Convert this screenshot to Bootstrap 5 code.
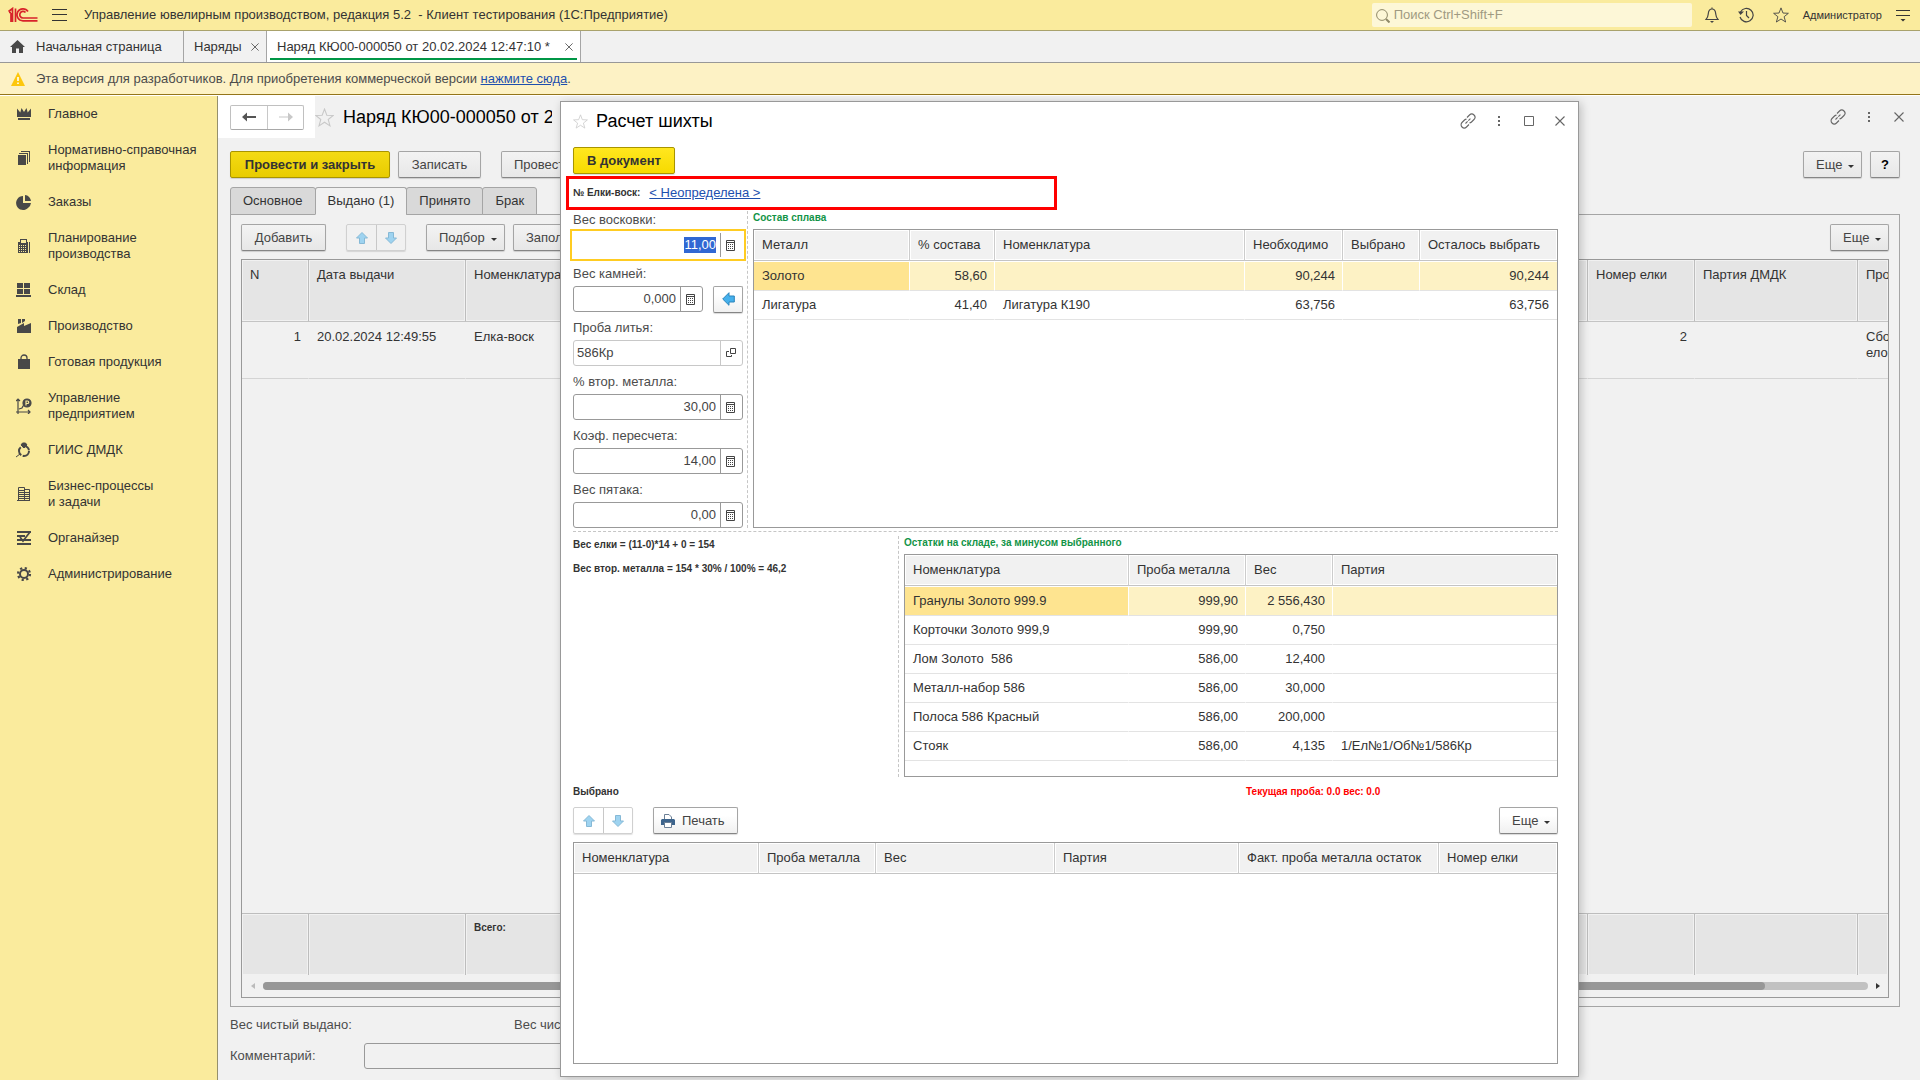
<!DOCTYPE html>
<html lang="ru">
<head>
<meta charset="utf-8">
<meta name="viewport" content="width=device-width, initial-scale=1">
<title>Управление ювелирным производством</title>
<link rel="stylesheet" href="https://cdn.jsdelivr.net/npm/bootstrap@5.3.0/dist/css/bootstrap.min.css">
<style>
body{font-family:"Liberation Sans",Arial,sans-serif;font-size:13px;line-height:16px;color:#333;background:#f1f1f1;min-height:100vh}
svg{display:block;flex:none}
a{color:#1d4fae}
::selection{background:#3067d3;color:#fff}
.topbar{height:31px;background:#faeb9d;border-bottom:1px solid #a9a26c;padding-right:10px}
.plain-btn{border:0;background:none;padding:0;color:#444}
.menu-btn{margin:0 17px 0 14px}
.top-tools{gap:19px;margin:0 14px 0 13px}
.search-box{width:320px;height:24px;background:#fdf7d7;border-radius:2px}
.search-box input{border:0;background:none;padding:0;outline:0;font-size:13px}
.search-box input::placeholder{color:#a09a82;opacity:1}
.user-name{font-size:11px;color:#333;margin-right:14px}
.tabbar{height:32px;background:#f1f1f1;border-bottom:1px solid #989898}
.page-tab{border-right:1px solid #a5a5a5;height:31px;padding:0 7px 0 10px}
.page-tab svg{color:#555}
.page-tab.home{width:184px;gap:11px}
.page-tab.list{width:83px}
.page-tab.current{width:314px;background:#fff;position:relative}
.page-tab.current::after{content:"";position:absolute;left:3px;right:3px;bottom:2px;height:2px;background:#009646}
.notice{height:32px;background:#fdf2c5;border-bottom:1px solid #94751a;color:#4c4c4c;padding-left:11px;gap:11px}
.workspace{border-top:1px solid #fff}
.sidebar{width:218px;background:#faeb9d;border-right:1px solid #95906c}
.sidebar a{color:#333;text-decoration:none;padding:10px 12px 10px 16px;gap:16px}
.sidebar svg{color:#484848}
.main{background:#f1f1f1;min-width:0}
.nav-history{width:97px;height:42px;background:#fff;padding-left:12px}
.seg{border:1px solid #c0c0c0;border-bottom-color:#a8a8a8;border-radius:2px}
.seg button{border:0;background:none;width:36px;height:23px;padding:0}
.seg button+button{border-left:1px solid #c8c8c8}
.seg.arrows button{width:29px;height:25px}
.seg.arrows{border-color:#d0d0d0;box-shadow:0 1px 1px rgba(0,0,0,.12);margin:0 20px}
.seg.arrows.at-start{margin-left:0}
.form-title{font-size:18px;line-height:22px;color:#000;margin:0;font-weight:400}
.doc-title{width:209px;overflow:hidden;margin-left:9px}
.win-tools{gap:21px;color:#666}
.win-tools .close-gap{margin-left:2px}
.doc-tools{padding-right:16px}
.form-area{padding:13px 20px 11px 12px}
.cmd{height:27px;font-size:13px;line-height:16px;padding:0 12px;border:1px solid #a5a5a5;border-bottom-color:#858585;border-radius:2px;color:#444;background:linear-gradient(#f3f3f3,#e7e7e7);box-shadow:0 1px 1px rgba(0,0,0,.15)}
.cmd-main{background:linear-gradient(#f4da14,#e8cc00);border-color:#a89400;font-weight:700;color:#333}
.cmd-more{width:59px;padding:0 7px 0 12px}
.cmd-pick{width:79px;padding:0 7px 0 12px}
.cmd-help{width:30px;padding:0}
.cmd-print{padding:0 12px 0 7px;gap:7px;width:85px}
.w-post{width:160px}.w-save{width:83px}.w-add{width:85px}.w-doc{width:102px}
.caret{border:3px solid transparent;border-top-color:#333;border-bottom:0;margin-top:4px}
.cmd-row{margin-bottom:9px}
.form-tabs{border:0;margin-bottom:-1px;position:relative;z-index:1}
.form-tabs .nav-link{height:28px;padding:0 12px;border:1px solid #a5a5a5;border-radius:3px 3px 0 0;background:#d9d9d9;color:#333;margin:0 0 0 -1px;line-height:16px}
.form-tabs .nav-item:first-child .nav-link{margin-left:0}
.form-tabs .nav-link.active{background:#f1f1f1;border-color:#a5a5a5;border-bottom-color:#f1f1f1;color:#333}
.form-panel{border:1px solid #a5a5a5;padding:9px 10px 8px}
.grid-box{border:1px solid #999;background:#fff;overflow:hidden}
.grid-tbl{width:100%;table-layout:fixed;border-collapse:separate;border-spacing:0}
.grid-tbl th,.grid-tbl td{font-weight:400;padding:0 7px 0 8px;white-space:nowrap;overflow:hidden;border-right:1px solid #ccc}
.grid-tbl th{height:31px;background:#f1f1f1;border-bottom:1px solid #c4c4c4;box-shadow:inset 0 0 0 1px #fff}
.grid-tbl td{height:29px;border-bottom:1px solid #e3e3e3;border-right-color:transparent}
.grid-tbl th:last-child,.grid-tbl td:last-child{border-right:0;padding-right:8px}
.grid-tbl .picked td{height:30px;background:#fdf2c5;border-right-color:#fff;box-shadow:inset 0 1px #fff;background-clip:padding-box}
.grid-tbl .picked td:first-child{background:#fee490}
.grid-main{background:#f1f1f1}
.grid-main th,.grid-main tfoot td{height:62px;background:#e5e5e5;vertical-align:top;padding-top:7px;border-right:1px solid #bdbdbd;box-shadow:inset 0 0 0 1px #f1f1f1}
.grid-main tbody td{height:57px;vertical-align:top;padding-top:7px;border-bottom-color:#d4d4d4}
.grid-main tfoot td{border-bottom:0;border-top:1px solid #bdbdbd}
.grid-main th:last-child,.grid-main td:last-child{padding-right:0}
.c-30{width:30px}.c-67{width:67px}.c-77{width:77px}.c-85{width:85px}.c-87{width:87px}.c-98{width:98px}.c-107{width:107px}.c-117{width:117px}
.c-156{width:156px}.c-157{width:157px}.c-163{width:163px}.c-179{width:179px}.c-184{width:184px}.c-185{width:185px}.c-200{width:200px}.c-224{width:224px}.c-250{width:250px}
.tiny,.grid-main tfoot .tiny{font-size:10px;line-height:14px;font-weight:700}
.scroller{height:22px;padding:0 8px 0 9px;gap:8px}
.scroll-track{height:8px;background:#c1c1c1;border-radius:4px}
.scroll-thumb{height:8px;background:#979797;border-radius:4px}
.summary{color:#4c4c4c}
.totals{margin:10px 0}
.totals span{width:284px}
.summary .lbl{width:134px}
.comment-in{height:26px;width:700px;border:1px solid #999;border-radius:3px;background:#f1f1f1}
.dlg{position:absolute;left:342px;top:5px;bottom:3px;width:1019px;background:#fff;border:1px solid #999;box-shadow:2px 2px 9px rgba(0,0,0,.22);z-index:5}
.dlg-head{height:38px;padding:0 13px 0 12px}
.dlg-body{padding:7px 20px 12px 12px}
.dlg .cmd{background:linear-gradient(#fff 30%,#f0f0f0)}
.dlg .cmd-main{background:linear-gradient(#ffe71f,#f7da00)}
.tree-box{border:3px solid #f00;width:491px;height:34px;margin:2px 0 1px -7px;padding-left:4px;gap:9px}
.fields{width:175px;border-right:1px dashed #c6c6c6;color:#4c4c4c}
.field{margin-bottom:7px}
.field:last-child{margin-bottom:0}
.field label{display:block;padding-top:1px;margin-bottom:4px}
.field-line{gap:10px;height:26px}
.entry{height:26px;width:170px;border:1px solid #999;border-radius:3px;background:#fff}
.entry.short{width:130px}
.entry input{border:0;outline:0;background:none;font-size:13px;padding:0 4px 0 3px;min-width:0;color:#444}
.entry button{flex:none;width:22px;border:0;border-left:1px solid #999;background:none;padding:0 0 0 5px;color:#444;align-self:stretch}
.entry.locked,.entry.locked button{border-color:#c8c8c8}
.entry.hot{border-color:#fff;border-radius:0;box-shadow:0 0 0 1px #fff,0 0 0 3px #fc2}
.back-btn{width:30px;height:27px;padding:0}
.beside{margin-left:5px}
.split-h{border-top:1px dashed #c6c6c6;margin:3px 0 4px}
.calc{width:326px;border-right:1px dashed #c6c6c6;padding-top:2px}
.calc p{margin:0 0 10px}
.green{color:#129447}
.stock{height:223px}
.status{color:#f00;width:312px}
</style>
</head>
<body class="d-flex flex-column">
<svg width="0" height="0" class="position-absolute" aria-hidden="true">
<defs>
<symbol id="i-star" viewBox="0 0 18 18"><path d="M9 1l2.200 5.800 6.100.300-4.800 3.800 1.700 6L9 13.500 3.800 16.900l1.700-6L.700 7.100l6.100-.300z" fill="none" stroke="currentColor"/></symbol>
<symbol id="i-link" viewBox="0 0 16 16"><g fill="none" stroke="currentColor" stroke-width="1.100"><path d="M7 4.500l2.500-2.500a3 3 0 0 1 4.500 4.500L11.500 9A3 3 0 0 1 9.500 9.900M9 11.500L6.500 14A3 3 0 0 1 2 9.500L4.500 7A3 3 0 0 1 6.500 6.100"/><path d="M5.500 10.500l5-5" stroke-dasharray="3 1"/></g></symbol>
<symbol id="i-dots" viewBox="0 0 4 12"><path d="M1 1h2v2H1zM1 5h2v2H1zM1 9h2v2H1z" fill="currentColor"/></symbol>
<symbol id="i-x" viewBox="0 0 10 10"><path d="M.500.500l9 9M9.500.500l-9 9" stroke="currentColor" stroke-width="1.100"/></symbol>
<symbol id="i-calc" viewBox="0 0 9 11"><path d="M.500.500h8v10h-8z" fill="none" stroke="currentColor"/><path d="M1 2.500h7M2 4.500h1M4 4.500h1M6 4.500h1M2 6.500h1M4 6.500h1M6 6.500h1M2 8.500h1M4 8.500h1M6 8.500h1" stroke="currentColor"/></symbol>
<symbol id="i-up" viewBox="0 0 12 12"><path d="M6 .500L11.500 6H8.500v5.500h-5V6H.500z" fill="#9ed3f0" stroke="#86b9d6"/></symbol>
<symbol id="i-down" viewBox="0 0 12 12"><path d="M6 11.500L11.500 6H8.500V.500h-5V6H.500z" fill="#9ed3f0" stroke="#86b9d6"/></symbol>
</defs>
</svg>

<header class="topbar d-flex align-items-center">
  <svg class="ms-2" width="30" height="16" viewBox="0 0 30 16" fill="none" stroke="#d8232a" stroke-width="1.700"><path d="M.500 4.500L4.500 1.500V15M3 6v9M7.500 15V1.500M1 5.500h2"/><path d="M20 4.500A6 6 0 1 0 15 13.800H29.500"/><path d="M17.500 5.500A3.300 3.300 0 1 0 15 11H29.500"/></svg>
  <button class="plain-btn menu-btn" aria-label="Меню"><svg width="15" height="12" viewBox="0 0 15 12"><path d="M0 .500h15M0 5.500h15M0 11.500h15" stroke="#333"/></svg></button>
  <span class="text-nowrap">Управление ювелирным производством, редакция 5.2 &nbsp;- Клиент тестирования (1С:Предприятие)</span>
  <div class="search-box ms-auto d-flex align-items-center">
    <svg class="ms-1" width="14" height="15" viewBox="0 0 14 15" fill="none" stroke="#8f8968"><circle cx="6" cy="7" r="5.400"/><path d="M10 11l3.500 3.500" stroke-width="2"/></svg>
    <input class="flex-grow-1 ms-1" type="search" placeholder="Поиск Ctrl+Shift+F" aria-label="Поиск">
  </div>
  <div class="top-tools d-flex align-items-center">
    <button class="plain-btn" aria-label="Уведомления"><svg width="14" height="16" viewBox="0 0 14 16"><path d="M1 12.500c2-2 2-3 2.300-6C3.600 3.500 5 2 7 2s3.400 1.500 3.700 4.500c.300 3 .300 4 2.300 6zM7 .500V2" fill="none" stroke="currentColor" stroke-width="1.200"/><path d="M5 14h4l-2 2z" fill="currentColor"/></svg></button>
    <button class="plain-btn" aria-label="История"><svg width="16" height="16" viewBox="0 0 16 16"><path d="M2.500 5A6.700 6.700 0 1 1 2 10M8.500 4v4.500l2.500 2.500" fill="none" stroke="currentColor" stroke-width="1.200"/><path d="M0 4.500h6L2.500 8z" fill="currentColor"/></svg></button>
    <button class="plain-btn" aria-label="Избранное"><svg width="16" height="16"><use href="#i-star"/></svg></button>
  </div>
  <span class="user-name">Администратор</span>
  <button class="plain-btn" aria-label="Настройки"><svg width="14" height="14" viewBox="0 0 14 14"><path d="M0 2.500h14M0 7.500h14" stroke="#333"/><path d="M4.500 11h5L7 13.500z" fill="#333"/></svg></button>
</header>

<nav class="tabbar d-flex" aria-label="Открытые окна">
  <div class="page-tab home d-flex align-items-center">
    <svg width="15" height="13" viewBox="0 0 15 13"><path d="M7.500 0L15 7h-2v6H9V8.500H6V13H2V7H0z" fill="#484848"/></svg>Начальная страница</div>
  <div class="page-tab list d-flex align-items-center justify-content-between">Наряды <svg width="8" height="8"><use href="#i-x"/></svg></div>
  <div class="page-tab current d-flex align-items-center justify-content-between">Наряд КЮ00-000050 от 20.02.2024 12:47:10 * <svg width="8" height="8"><use href="#i-x"/></svg></div>
</nav>

<div class="notice d-flex align-items-center">
  <svg width="14" height="14" viewBox="0 0 14 14"><path d="M7 0l7 14H0z" fill="#fdc70c"/><path d="M7 5v4M7 10.500v1.500" stroke="#fff" stroke-width="1.600"/></svg>
  <span>Эта версия для разработчиков. Для приобретения коммерческой версии <a href="#">нажмите сюда</a>.</span>
</div>

<div class="workspace d-flex flex-grow-1">
<aside class="sidebar flex-shrink-0 d-flex flex-column">
  <a href="#" class="d-flex align-items-center"><svg width="16" height="16" viewBox="0 0 16 16" fill="currentColor"><path d="M1 2.500l3.300 4L5.500 2l2.500 4L10.500 2l1.200 4.500 3.300-4v8.500H1zM2 12h12v2H2z"/></svg>Главное</a>
  <a href="#" class="d-flex align-items-center"><svg width="16" height="16" viewBox="0 0 16 16" fill="currentColor"><path d="M2 5h8v10H2zM3 3h9v11h-1V4H3zM5 1h9v11h-1V2H5z"/></svg>Нормативно-справочная информация</a>
  <a href="#" class="d-flex align-items-center"><svg width="16" height="16" viewBox="0 0 16 16" fill="currentColor"><path d="M7 2v7l4.500 4.500 .500.500A7 7 0 1 1 7 2zM7 9h8a7 7 0 0 1-3 5zM9 1a6.500 6.500 0 0 1 6 6H9z"/></svg>Заказы</a>
  <a href="#" class="d-flex align-items-center"><svg width="16" height="16" viewBox="0 0 16 16"><path fill="currentColor" fill-rule="evenodd" d="M2 4h2V1h7v3h1v11H2zM5 2v3h5V2zM13 4h1v11h-1zM3 7v1h1V7zm2 0v1h1V7zm2 0v1h1V7zm2 0v1h1V7zM3 9v1h1V9zm2 0v1h1V9zm2 0v1h1V9zm2 0v1h1V9zM3 11v1h1v-1zm2 0v1h1v-1zm2 0v1h1v-1zm2 0v1h1v-1zM3 13v1h1v-1zm2 0v1h1v-1zm2 0v1h1v-1zm2 0v1h1v-1z"/></svg>Планирование производства</a>
  <a href="#" class="d-flex align-items-center"><svg width="16" height="16" viewBox="0 0 16 16" fill="currentColor"><path d="M1 1h6v5H1zM8 1h6v5H8zM1 7h6v5H1zM8 7h6v5H8zM0 13h15v2H0z"/></svg>Склад</a>
  <a href="#" class="d-flex align-items-center"><svg width="16" height="16" viewBox="0 0 16 16" fill="currentColor"><path d="M2 1h3v4L2 6zM6 1h3v2L6 5zM1 9l7-4v3l7-3v10H1z"/></svg>Производство</a>
  <a href="#" class="d-flex align-items-center"><svg width="16" height="16" viewBox="0 0 16 16"><path d="M2 5h12v10H2z" fill="currentColor"/><path d="M5 8V4a3 3 0 0 1 6 0v4" fill="none" stroke="currentColor" stroke-width="1.300"/></svg>Готовая продукция</a>
  <a href="#" class="d-flex align-items-center"><svg width="16" height="16" viewBox="0 0 16 16" fill="none" stroke="currentColor" stroke-width="1.200"><path d="M2 16V1M0 3l2-2 2 2M0 14h14M12 12l2 2-2 2M3 11l3-1 1-2 3-1"/><circle cx="11" cy="5" r="4" fill="currentColor"/><path d="M10 7.500V3h1.500a1 1 0 0 1 0 2.500H9.500" stroke="#faeb9d"/></svg>Управление предприятием</a>
  <a href="#" class="d-flex align-items-center"><svg width="16" height="16" viewBox="0 0 16 16"><circle cx="8" cy="9" r="5" fill="none" stroke="currentColor" stroke-width="2" stroke-dasharray="9 1.500"/><path d="M5 3l1.500-2h3L11 3 8 6zM0 15l4-3" fill="currentColor" stroke="currentColor"/></svg>ГИИС ДМДК</a>
  <a href="#" class="d-flex align-items-center"><svg width="16" height="16" viewBox="0 0 16 16" fill="none" stroke="currentColor"><path d="M2.500 15V1.500h6V15M8.500 3.500h5V15M1 14.500h13M3 4.500h6M3 6.500h10M3 8.500h10M3 10.500h10M3 12.500h10"/></svg>Бизнес-процессы<br>и задачи</a>
  <a href="#" class="d-flex align-items-center"><svg width="16" height="16" viewBox="0 0 16 16" fill="none" stroke="currentColor" stroke-width="2"><path d="M1 2h14M1 6h8M1 10h14M1 14h14"/><path d="M4 7l3 4 7-9" stroke-width="1.700"/></svg>Органайзер</a>
  <a href="#" class="d-flex align-items-center"><svg width="16" height="16" viewBox="0 0 16 16" fill="none" stroke="currentColor"><circle cx="8" cy="8" r="4" stroke-width="2"/><circle cx="8" cy="8" r="6" stroke-width="2.200" stroke-dasharray="2.200 2.512"/></svg>Администрирование</a>
</aside>

<main class="main flex-grow-1 position-relative d-flex flex-column">
  <div class="d-flex align-items-center">
    <div class="nav-history d-flex align-items-center">
      <div class="seg d-flex"><button aria-label="Назад"><svg class="mx-auto" width="14" height="10" viewBox="0 0 14 10"><path d="M0 5l5-4.500V4h9v2H5v3.500z" fill="#555"/></svg></button><button aria-label="Вперед"><svg class="mx-auto" width="14" height="10" viewBox="0 0 14 10"><path d="M14 5L9 .500V4.500H0v1h9v4z" fill="#c8c8c8"/></svg></button></div>
    </div>
    <svg width="19" height="19" color="#c8c8c8"><use href="#i-star"/></svg>
    <h1 class="form-title doc-title text-nowrap">Наряд КЮ00-000050 от 20.02.2024</h1>
    <div class="win-tools doc-tools ms-auto d-flex align-items-center">
      <svg width="16" height="16"><use href="#i-link"/></svg><svg width="4" height="12"><use href="#i-dots"/></svg><svg class="close-gap" width="10" height="10"><use href="#i-x"/></svg>
    </div>
  </div>

  <div class="form-area d-flex flex-column flex-grow-1">
    <div class="cmd-row d-flex">
      <button class="cmd cmd-main w-post me-2">Провести и закрыть</button>
      <button class="cmd w-save me-3">Записать</button>
      <button class="cmd ms-1">Провести</button>
      <button class="cmd cmd-more ms-auto me-2 d-flex align-items-center justify-content-between">Еще<span class="caret"></span></button>
      <button class="cmd cmd-help fw-bold text-black">?</button>
    </div>
    <ul class="nav nav-tabs form-tabs">
      <li class="nav-item"><button class="nav-link">Основное</button></li>
      <li class="nav-item"><button class="nav-link active">Выдано (1)</button></li>
      <li class="nav-item"><button class="nav-link">Принято</button></li>
      <li class="nav-item"><button class="nav-link">Брак</button></li>
    </ul>
    <section class="form-panel flex-grow-1 d-flex flex-column">
      <div class="d-flex mb-2">
        <button class="cmd w-add">Добавить</button>
        <div class="seg arrows d-flex"><button aria-label="Вверх"><svg class="mx-auto" width="12" height="12"><use href="#i-up"/></svg></button><button aria-label="Вниз"><svg class="mx-auto" width="12" height="12"><use href="#i-down"/></svg></button></div>
        <button class="cmd cmd-pick me-2 d-flex align-items-center justify-content-between">Подбор<span class="caret"></span></button>
        <button class="cmd">Заполнить</button>
        <button class="cmd cmd-more ms-auto d-flex align-items-center justify-content-between">Еще<span class="caret"></span></button>
      </div>
      <div class="grid-box grid-main flex-grow-1 d-flex flex-column">
        <table class="grid-tbl">
          <colgroup><col class="c-67"><col class="c-157"><col><col class="c-107"><col class="c-163"><col class="c-30"></colgroup>
          <thead><tr><th>N</th><th>Дата выдачи</th><th>Номенклатура</th><th>Номер елки</th><th>Партия ДМДК</th><th>Проба</th></tr></thead>
          <tbody><tr><td class="text-end">1</td><td>20.02.2024 12:49:55</td><td>Елка-воск</td><td class="text-end">2</td><td></td><td>Сборка<br>елок</td></tr></tbody>
        </table>
        <table class="grid-tbl mt-auto">
          <colgroup><col class="c-67"><col class="c-157"><col><col class="c-107"><col class="c-163"><col class="c-30"></colgroup>
          <tfoot><tr><td></td><td></td><td class="tiny">Всего:</td><td></td><td></td><td></td></tr></tfoot>
        </table>
        <div class="scroller d-flex align-items-center">
          <svg width="4" height="6" viewBox="0 0 4 6"><path d="M4 0v6L0 3z" fill="#bbb"/></svg>
          <div class="scroll-track flex-grow-1"><div class="scroll-thumb" style="width:93.6%"></div></div>
          <svg width="4" height="6" viewBox="0 0 4 6"><path d="M0 0v6l4-3z" fill="#333"/></svg>
        </div>
      </div>
    </section>
    <div class="summary totals d-flex"><span>Вес чистый выдано:</span><span>Вес чистый принято:</span></div>
    <div class="summary d-flex align-items-center"><label class="lbl" for="comment">Комментарий:</label><input id="comment" class="comment-in"></div>
  </div>

  <section class="dlg d-flex flex-column" role="dialog" aria-label="Расчет шихты">
    <div class="dlg-head d-flex align-items-center">
      <svg width="15" height="15" color="#ccc"><use href="#i-star"/></svg>
      <h2 class="form-title ms-2">Расчет шихты</h2>
      <div class="win-tools ms-auto d-flex align-items-center">
        <svg width="16" height="16"><use href="#i-link"/></svg><svg width="4" height="12"><use href="#i-dots"/></svg>
        <svg class="close-gap" width="10" height="10" viewBox="0 0 10 10"><path d="M.500.500h9v9h-9z" fill="none" stroke="currentColor"/></svg>
        <svg width="10" height="10"><use href="#i-x"/></svg>
      </div>
    </div>
    <div class="dlg-body d-flex flex-column flex-grow-1">
      <div><button class="cmd cmd-main w-doc d-block">В документ</button></div>
      <div class="tree-box d-flex align-items-center"><span class="tiny">№ Елки-воск:</span><a href="#">&lt; Неопределена &gt;</a></div>
      <div class="d-flex">
        <div class="fields flex-shrink-0">
          <div class="field"><label for="f1">Вес восковки:</label><div class="entry hot d-flex"><input id="f1" class="flex-grow-1 text-end" value="11,00"><button aria-label="Калькулятор"><svg width="9" height="11"><use href="#i-calc"/></svg></button></div></div>
          <div class="field"><label for="f2">Вес камней:</label><div class="field-line d-flex align-items-center"><div class="entry short d-flex"><input id="f2" class="flex-grow-1 text-end" value="0,000"><button aria-label="Калькулятор"><svg width="9" height="11"><use href="#i-calc"/></svg></button></div><button class="cmd back-btn" aria-label="Заполнить"><svg class="mx-auto" width="13" height="14" viewBox="0 0 13 14"><path d="M.700 7L7 .700V4h5.300v6H7v3.300z" fill="#45b0ec" stroke="#2a84bb"/></svg></button></div></div>
          <div class="field"><label for="f3">Проба литья:</label><div class="entry locked d-flex"><input id="f3" class="flex-grow-1" value="586Кр"><button aria-label="Открыть"><svg width="11" height="10" viewBox="0 0 11 10"><path d="M4.500.500h5v5h-5zM3 3.500H.500v5h5V7" fill="none" stroke="currentColor"/></svg></button></div></div>
          <div class="field"><label for="f4">% втор. металла:</label><div class="entry d-flex"><input id="f4" class="flex-grow-1 text-end" value="30,00"><button aria-label="Калькулятор"><svg width="9" height="11"><use href="#i-calc"/></svg></button></div></div>
          <div class="field"><label for="f5">Коэф. пересчета:</label><div class="entry d-flex"><input id="f5" class="flex-grow-1 text-end" value="14,00"><button aria-label="Калькулятор"><svg width="9" height="11"><use href="#i-calc"/></svg></button></div></div>
          <div class="field"><label for="f6">Вес пятака:</label><div class="entry d-flex"><input id="f6" class="flex-grow-1 text-end" value="0,00"><button aria-label="Калькулятор"><svg width="9" height="11"><use href="#i-calc"/></svg></button></div></div>
        </div>
        <div class="beside flex-grow-1 d-flex flex-column">
          <div class="tiny green mb-1">Состав сплава</div>
          <div class="grid-box flex-grow-1">
            <table class="grid-tbl">
              <colgroup><col class="c-156"><col class="c-85"><col class="c-250"><col class="c-98"><col class="c-77"><col></colgroup>
              <thead><tr><th>Металл</th><th>% состава</th><th>Номенклатура</th><th>Необходимо</th><th>Выбрано</th><th>Осталось выбрать</th></tr></thead>
              <tbody>
                <tr class="picked"><td>Золото</td><td class="text-end">58,60</td><td></td><td class="text-end">90,244</td><td></td><td class="text-end">90,244</td></tr>
                <tr><td>Лигатура</td><td class="text-end">41,40</td><td>Лигатура К190</td><td class="text-end">63,756</td><td></td><td class="text-end">63,756</td></tr>
              </tbody>
            </table>
          </div>
        </div>
      </div>
      <div class="split-h"></div>
      <div class="d-flex">
        <div class="calc tiny flex-shrink-0"><p>Вес елки = (11-0)*14 + 0 = 154</p><p>Вес втор. металла = 154 * 30% / 100% = 46,2</p></div>
        <div class="beside flex-grow-1">
          <div class="tiny green mb-1">Остатки на складе, за минусом выбранного</div>
          <div class="grid-box stock">
            <table class="grid-tbl">
              <colgroup><col class="c-224"><col class="c-117"><col class="c-87"><col></colgroup>
              <thead><tr><th>Номенклатура</th><th>Проба металла</th><th>Вес</th><th>Партия</th></tr></thead>
              <tbody>
                <tr class="picked"><td>Гранулы Золото 999.9</td><td class="text-end">999,90</td><td class="text-end">2 556,430</td><td></td></tr>
                <tr><td>Корточки Золото 999,9</td><td class="text-end">999,90</td><td class="text-end">0,750</td><td></td></tr>
                <tr><td>Лом Золото &nbsp;586</td><td class="text-end">586,00</td><td class="text-end">12,400</td><td></td></tr>
                <tr><td>Металл-набор 586</td><td class="text-end">586,00</td><td class="text-end">30,000</td><td></td></tr>
                <tr><td>Полоса 586 Красный</td><td class="text-end">586,00</td><td class="text-end">200,000</td><td></td></tr>
                <tr><td>Стояк</td><td class="text-end">586,00</td><td class="text-end">4,135</td><td>1/Ел№1/Об№1/586Кр</td></tr>
              </tbody>
            </table>
          </div>
        </div>
      </div>
      <div class="tiny d-flex justify-content-between mt-2"><span>Выбрано</span><span class="status">Текущая проба: 0.0 вес: 0.0</span></div>
      <div class="d-flex mt-2 mb-2">
        <div class="seg arrows at-start d-flex"><button aria-label="Вверх"><svg class="mx-auto" width="12" height="12"><use href="#i-up"/></svg></button><button aria-label="Вниз"><svg class="mx-auto" width="12" height="12"><use href="#i-down"/></svg></button></div>
        <button class="cmd cmd-print d-flex align-items-center"><svg width="14" height="14" viewBox="0 0 14 14"><path d="M3.500 6V.500H8L10.500 3v3" fill="#fff" stroke="#6b7f95"/><path d="M0 6l1-1h12l1 1v5H0z" fill="#3d648c"/><path d="M3.500 8.500h7v5h-7z" fill="#fff" stroke="#6b7f95"/></svg>Печать</button>
        <button class="cmd cmd-more ms-auto d-flex align-items-center justify-content-between">Еще<span class="caret"></span></button>
      </div>
      <div class="grid-box flex-grow-1">
        <table class="grid-tbl">
          <colgroup><col class="c-185"><col class="c-117"><col class="c-179"><col class="c-184"><col class="c-200"><col></colgroup>
          <thead><tr><th>Номенклатура</th><th>Проба металла</th><th>Вес</th><th>Партия</th><th>Факт. проба металла остаток</th><th>Номер елки</th></tr></thead>
        </table>
      </div>
    </div>
  </section>
</main>
</div>
<script src="https://cdn.jsdelivr.net/npm/bootstrap@5.3.0/dist/js/bootstrap.bundle.min.js"></script>
<script>
const first = document.getElementById('f1');
first.focus();
first.select();
</script>
</body>
</html>
